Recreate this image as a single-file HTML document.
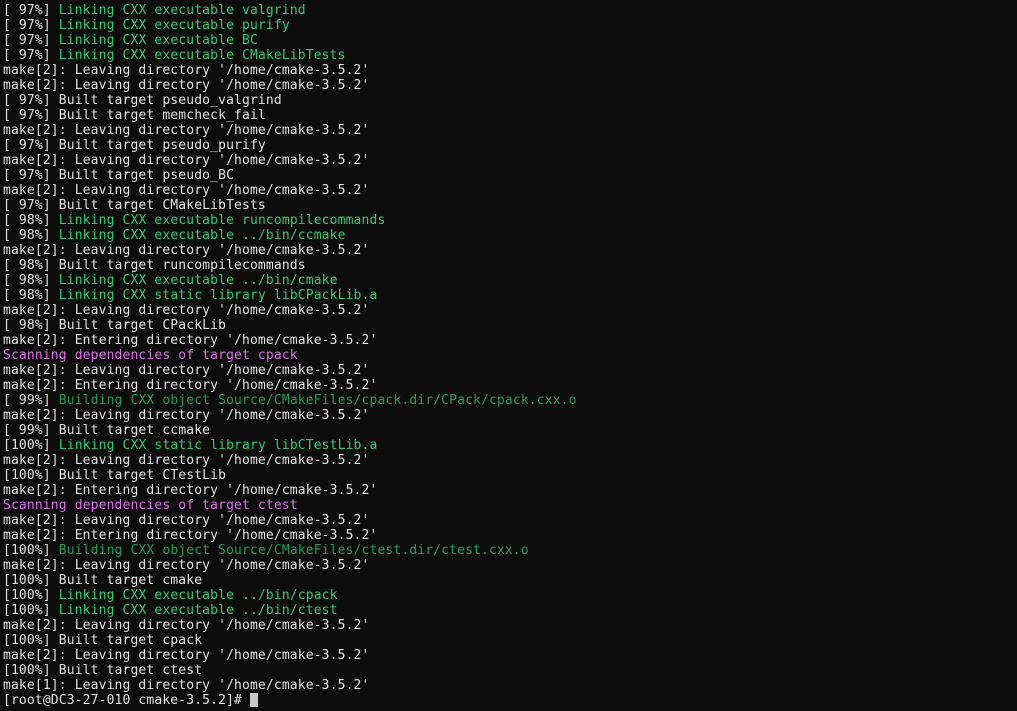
<!DOCTYPE html><html><head><style>
html,body{margin:0;background:#0c0c0c;width:1017px;height:711px;overflow:hidden}
pre{margin:0;padding:3px 0 0 3px;font-family:"DejaVu Sans Mono","Liberation Mono",monospace;font-size:13px;line-height:15px;letter-spacing:0.14px;color:#e2e2e2}
.g{color:#2ecf72}.d{color:#1f9f55}.m{color:#e070ec}
.c{display:inline-block;width:8px;height:14px;background:#c8c8c8;vertical-align:-3px}
</style></head><body><pre>[ 97%] <span class="g">Linking CXX executable valgrind</span>
[ 97%] <span class="g">Linking CXX executable purify</span>
[ 97%] <span class="g">Linking CXX executable BC</span>
[ 97%] <span class="g">Linking CXX executable CMakeLibTests</span>
make[2]: Leaving directory '/home/cmake-3.5.2'
make[2]: Leaving directory '/home/cmake-3.5.2'
[ 97%] Built target pseudo_valgrind
[ 97%] Built target memcheck_fail
make[2]: Leaving directory '/home/cmake-3.5.2'
[ 97%] Built target pseudo_purify
make[2]: Leaving directory '/home/cmake-3.5.2'
[ 97%] Built target pseudo_BC
make[2]: Leaving directory '/home/cmake-3.5.2'
[ 97%] Built target CMakeLibTests
[ 98%] <span class="g">Linking CXX executable runcompilecommands</span>
[ 98%] <span class="g">Linking CXX executable ../bin/ccmake</span>
make[2]: Leaving directory '/home/cmake-3.5.2'
[ 98%] Built target runcompilecommands
[ 98%] <span class="g">Linking CXX executable ../bin/cmake</span>
[ 98%] <span class="g">Linking CXX static library libCPackLib.a</span>
make[2]: Leaving directory '/home/cmake-3.5.2'
[ 98%] Built target CPackLib
make[2]: Entering directory '/home/cmake-3.5.2'
<span class="m">Scanning dependencies of target cpack</span>
make[2]: Leaving directory '/home/cmake-3.5.2'
make[2]: Entering directory '/home/cmake-3.5.2'
[ 99%] <span class="d">Building CXX object Source/CMakeFiles/cpack.dir/CPack/cpack.cxx.o</span>
make[2]: Leaving directory '/home/cmake-3.5.2'
[ 99%] Built target ccmake
[100%] <span class="g">Linking CXX static library libCTestLib.a</span>
make[2]: Leaving directory '/home/cmake-3.5.2'
[100%] Built target CTestLib
make[2]: Entering directory '/home/cmake-3.5.2'
<span class="m">Scanning dependencies of target ctest</span>
make[2]: Leaving directory '/home/cmake-3.5.2'
make[2]: Entering directory '/home/cmake-3.5.2'
[100%] <span class="d">Building CXX object Source/CMakeFiles/ctest.dir/ctest.cxx.o</span>
make[2]: Leaving directory '/home/cmake-3.5.2'
[100%] Built target cmake
[100%] <span class="g">Linking CXX executable ../bin/cpack</span>
[100%] <span class="g">Linking CXX executable ../bin/ctest</span>
make[2]: Leaving directory '/home/cmake-3.5.2'
[100%] Built target cpack
make[2]: Leaving directory '/home/cmake-3.5.2'
[100%] Built target ctest
make[1]: Leaving directory '/home/cmake-3.5.2'
[root@DC3-27-010 cmake-3.5.2]# <span class="c"></span></pre></body></html>
